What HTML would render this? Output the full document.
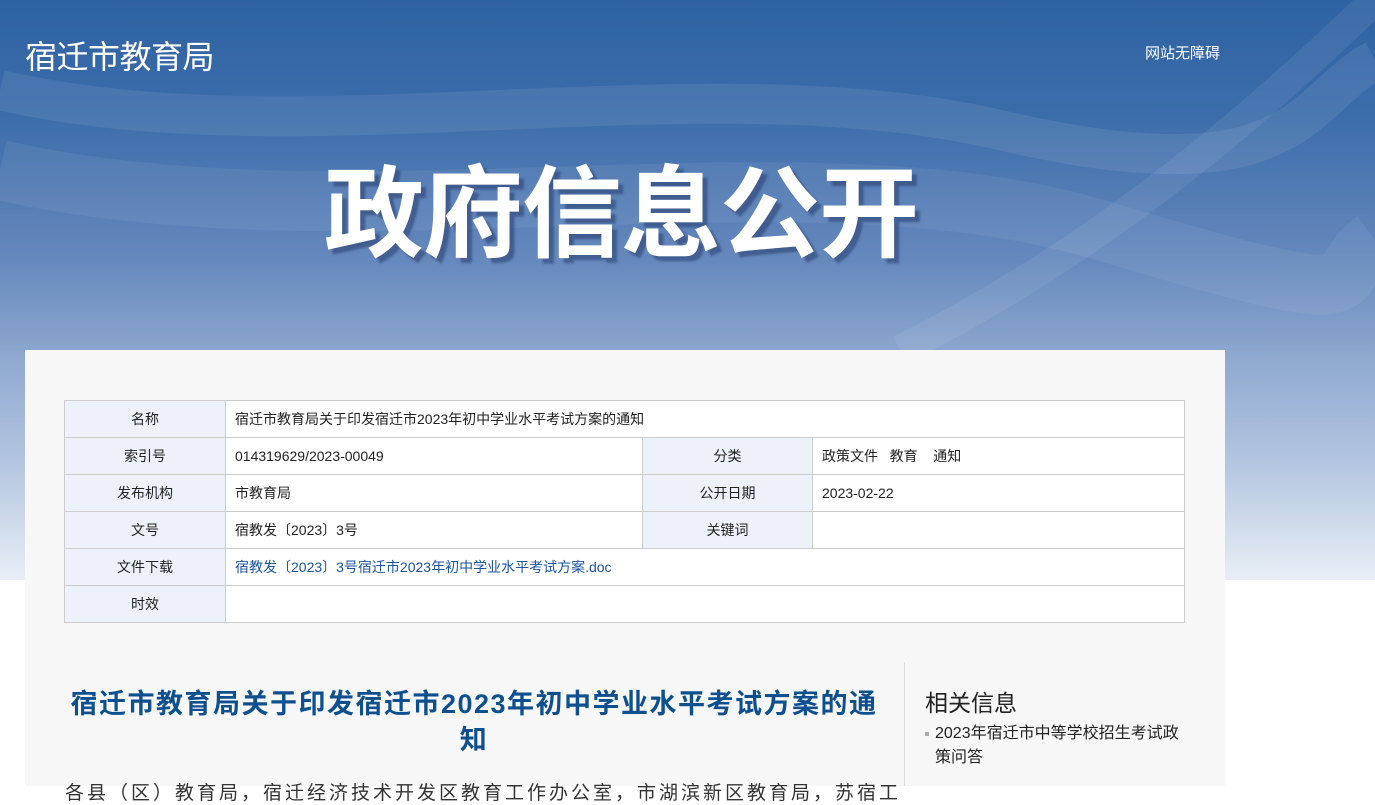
<!DOCTYPE html>
<html><head><meta charset="utf-8"><style>
*{margin:0;padding:0;box-sizing:border-box}
body{width:1375px;height:786px;overflow:hidden;font-family:"Liberation Sans","Noto Sans CJK SC",sans-serif;background:#fff;position:relative}
.bg{position:absolute;left:0;top:0;width:1375px;height:580px;background:linear-gradient(180deg,#2f62a3 0%,#3c6dab 20%,#6689bd 45%,#8fa9d0 62%,#b4c6e0 80%,#e8eef6 100%);overflow:hidden}
.logo{position:absolute;left:25px;top:32px;color:#fff;font-size:32px;letter-spacing:-0.5px}
.acc{position:absolute;left:1145px;top:42px;color:#fff;font-size:15px}
.big{position:absolute;left:324px;top:160px;color:#fff;font-size:100px;font-weight:bold;letter-spacing:-1px;text-shadow:5px 5px 2px rgba(40,60,110,.55);line-height:1.1}
.panel{position:absolute;left:25px;top:350px;width:1200px;height:436px;background:#f7f7f7}
table{position:absolute;left:64px;top:400px;width:1121px;border-collapse:collapse;font-size:14px;color:#222}
td{border:1px solid #ccc;height:37px;background:#fff;padding:0 9px}
td.l{background:#edf1f9;text-align:center;width:161px}
td.l2{background:#edf1f9;text-align:center;width:170px}
a{color:#1a55a0;text-decoration:none}
h1{position:absolute;left:65px;top:686px;width:818px;text-align:center;color:#0d4f8f;font-size:27px;letter-spacing:1.5px;line-height:36px;font-weight:bold}
.vl{position:absolute;left:904px;top:662px;width:1px;height:124px;background:#ddd}
.rt{position:absolute;left:925px;top:684px;font-size:23px;color:#222}
.ri{position:absolute;left:935px;top:722px;width:255px;font-size:16px;line-height:24px;color:#222}
.ri:before{content:"";position:absolute;left:-10px;top:10px;width:4px;height:4px;background:#aaa}
.p{position:absolute;left:65px;top:778px;font-size:19px;letter-spacing:3px;color:#333;white-space:nowrap}
</style></head><body>
<div class="bg">
<svg width="1375" height="580" style="position:absolute;left:0;top:0">
<path d="M0 90 C300 160 700 60 1000 130 S1300 100 1375 60" stroke="rgba(255,255,255,.08)" stroke-width="40" fill="none"/>
<path d="M0 170 C350 250 800 140 1100 230 S1320 280 1375 240" stroke="rgba(255,255,255,.06)" stroke-width="60" fill="none"/>
<path d="M900 350 C1100 250 1250 120 1375 0" stroke="rgba(255,255,255,.07)" stroke-width="30" fill="none"/>
</svg>
</div>
<div class="logo">宿迁市教育局</div>
<div class="acc">网站无障碍</div>
<div class="big">政府信息公开</div>
<div class="panel"></div>
<table>
<tr><td class="l">名称</td><td colspan="3">宿迁市教育局关于印发宿迁市2023年初中学业水平考试方案的通知</td></tr>
<tr><td class="l">索引号</td><td style="width:417px">014319629/2023-00049</td><td class="l2">分类</td><td>政策文件&nbsp;&nbsp;&nbsp;教育&nbsp;&nbsp;&nbsp;&nbsp;通知</td></tr>
<tr><td class="l">发布机构</td><td>市教育局</td><td class="l2">公开日期</td><td>2023-02-22</td></tr>
<tr><td class="l">文号</td><td>宿教发〔2023〕3号</td><td class="l2">关键词</td><td></td></tr>
<tr><td class="l">文件下载</td><td colspan="3"><a>宿教发〔2023〕3号宿迁市2023年初中学业水平考试方案.doc</a></td></tr>
<tr><td class="l">时效</td><td colspan="3"></td></tr>
</table>
<h1>宿迁市教育局关于印发宿迁市2023年初中学业水平考试方案的通<br>知</h1>
<div class="vl"></div>
<div class="rt">相关信息</div>
<div class="ri">2023年宿迁市中等学校招生考试政策问答</div>
<div class="p">各县（区）教育局，宿迁经济技术开发区教育工作办公室，市湖滨新区教育局，苏宿工</div>
</body></html>
